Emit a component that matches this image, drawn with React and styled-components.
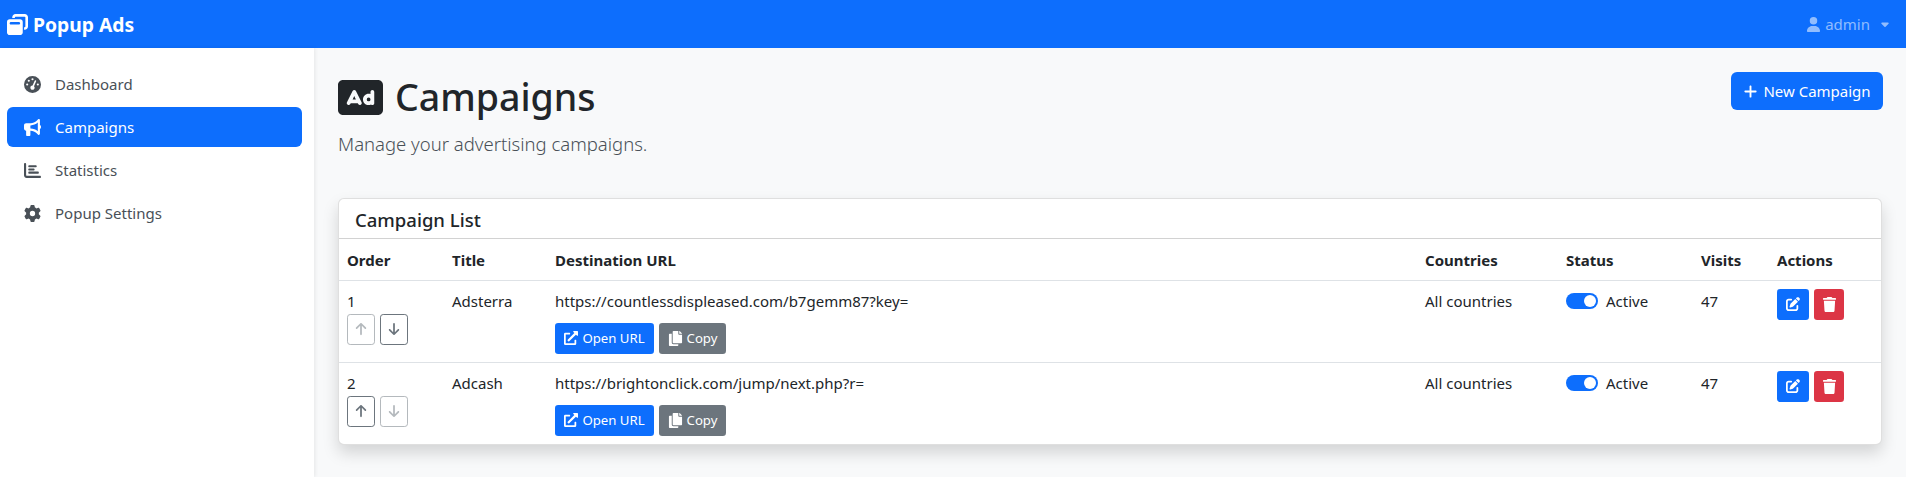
import React from "react";
import styled, { createGlobalStyle } from "styled-components";
import { FaCopy, FaExternalLinkAlt } from "react-icons/fa";
import {
  FaArrowDown,
  FaArrowUp,
  FaBullhorn,
  FaCaretDown,
  FaChartBar,
  FaGaugeHigh,
  FaGear,
  FaPenToSquare,
  FaPlus,
  FaRectangleAd,
  FaTrash,
  FaUser,
  FaWindowRestore,
} from "react-icons/fa6";

const GlobalStyle = createGlobalStyle`
  html, body {
    margin: 0;
    padding: 0;
    height: 100%;
    overflow: hidden;
    background: #f8f9fa;
  }

  body {
    font-family: "Noto Sans", "Open Sans", sans-serif;
    font-size: 15px;
    color: #212529;
  }

  * {
    box-sizing: border-box;
  }
`;

const Page = styled.div`
  display: flex;
  flex-direction: column;
  height: 477px;
`;

const Navbar = styled.header`
  display: flex;
  align-items: center;
  justify-content: space-between;
  flex: 0 0 48px;
  padding: 0 15px 0 7px;
  background: #0d6efd;
`;

const Brand = styled.div`
  display: flex;
  align-items: center;
  gap: 5px;
  color: #fff;
  font-size: 19.3px;
  font-weight: 700;
`;

const UserMenu = styled.div`
  display: flex;
  align-items: center;
  gap: 4px;
  color: rgba(255, 255, 255, 0.55);
  font-size: 15px;
`;

const Caret = styled(FaCaretDown)`
  margin-left: 5px;
`;

const Body = styled.div`
  display: flex;
  flex: 1;
  min-height: 0;
`;

const Sidebar = styled.nav`
  display: flex;
  flex-direction: column;
  gap: 3px;
  flex: 0 0 314px;
  padding: 16px 12px 0 7px;
  background: #fff;
  box-shadow: 1px 0 4px rgba(0, 0, 0, 0.08);
`;

const NavItem = styled.a`
  display: flex;
  align-items: center;
  gap: 14px;
  height: 40px;
  padding: 0 17px;
  border-radius: 6px;
  font-size: 15px;
  color: ${(props) => (props.$active ? "#fff" : "#495057")};
  background: ${(props) => (props.$active ? "#0d6efd" : "transparent")};
`;

const Main = styled.main`
  flex: 1;
  min-width: 0;
  padding: 24px 24px 0;
`;

const PageHeader = styled.div`
  display: flex;
  align-items: flex-start;
  justify-content: space-between;
  height: 126px;
`;

const PageTitle = styled.h1`
  display: flex;
  align-items: center;
  gap: 12px;
  margin: 0 0 8px;
  font-size: 37.5px;
  font-weight: 500;
  line-height: 50px;
`;

const Lead = styled.p`
  margin: 0;
  font-size: 18.5px;
  font-weight: 300;
  line-height: 28px;
  color: #495057;
`;

const Button = styled.button`
  display: inline-flex;
  align-items: center;
  justify-content: center;
  border: 1px solid transparent;
  color: #fff;
  font-family: inherit;
  background: ${(props) => props.$bg || "#0d6efd"};
`;

const NewButton = styled(Button)`
  gap: 5px;
  width: 152px;
  height: 38px;
  margin-right: -1px;
  border-radius: 6px;
  font-size: 15px;
`;

const SmallButton = styled(Button)`
  gap: 4px;
  width: ${(props) => props.$width}px;
  height: 31px;
  padding: 0;
  border-radius: 3.2px;
  font-size: 13.2px;
`;

const Card = styled.section`
  background: #fff;
  border: 1px solid rgba(0, 0, 0, 0.125);
  border-radius: 6px;
  box-shadow: 0 8px 16px rgba(0, 0, 0, 0.15);
`;

const CardHeader = styled.h5`
  display: flex;
  align-items: center;
  height: 40px;
  margin: 0;
  padding: 1px 16px 0;
  font-size: 18.5px;
  font-weight: 500;
  border-bottom: 1px solid rgba(0, 0, 0, 0.175);
`;

const Table = styled.table`
  width: 100%;
  table-layout: fixed;
  border-collapse: collapse;
`;

const Th = styled.th`
  height: 41px;
  padding: 1px 8px 0;
  font-size: 15px;
  font-weight: 700;
  text-align: left;
  border-bottom: 1px solid #dee2e6;
`;

const Td = styled.td`
  height: 82px;
  padding: 8px;
  font-size: 15px;
  line-height: 24px;
  vertical-align: top;
`;

const Row = styled.tr`
  &:not(:last-child) td {
    border-bottom: 1px solid #dee2e6;
  }
`;

const ButtonRow = styled.div`
  display: flex;
  gap: 5px;
  margin-top: ${(props) => props.$top || 0}px;
`;

const OrderButton = styled.button`
  display: flex;
  align-items: center;
  justify-content: center;
  width: 28px;
  height: 31px;
  padding: 0;
  background: transparent;
  border: 1px solid #6c757d;
  border-radius: 3.2px;
  color: #6c757d;
  font-size: 14px;
  opacity: ${(props) => (props.disabled ? 0.5 : 1)};
`;

const StatusCell = styled.div`
  display: flex;
  align-items: center;
  gap: 8px;
  height: 24px;
`;

const Switch = styled.span`
  position: relative;
  width: 32px;
  height: 16px;
  border-radius: 8px;
  background: #0d6efd;

  &::after {
    content: "";
    position: absolute;
    top: 2px;
    right: 2px;
    width: 12px;
    height: 12px;
    border-radius: 50%;
    background: #fff;
  }
`;

const campaigns = [
  { order: 1, title: "Adsterra", url: "https://countlessdispleased.com/b7gemm87?key=", up: false, down: true },
  { order: 2, title: "Adcash", url: "https://brightonclick.com/jump/next.php?r=", up: true, down: false },
];

const navItems = [
  { label: "Dashboard", icon: FaGaugeHigh },
  { label: "Campaigns", icon: FaBullhorn, active: true },
  { label: "Statistics", icon: FaChartBar },
  { label: "Popup Settings", icon: FaGear },
];

export default function App() {
  return (
    <Page>
      <GlobalStyle />
      <Navbar>
        <Brand>
          <FaWindowRestore size={21} />
          Popup Ads
        </Brand>
        <UserMenu>
          <FaUser size={15} />
          admin
          <Caret size={12} />
        </UserMenu>
      </Navbar>
      <Body>
        <Sidebar>
          {navItems.map((item) => (
            <NavItem key={item.label} $active={item.active}>
              <item.icon size={17} />
              {item.label}
            </NavItem>
          ))}
        </Sidebar>
        <Main>
          <PageHeader>
            <div>
              <PageTitle>
                <FaRectangleAd size={45} />
                Campaigns
              </PageTitle>
              <Lead>Manage your advertising campaigns.</Lead>
            </div>
            <NewButton>
              <FaPlus size={15} />
              New Campaign
            </NewButton>
          </PageHeader>
          <Card>
            <CardHeader>Campaign List</CardHeader>
            <Table>
              <colgroup>
                <col width="105" />
                <col width="103" />
                <col width="870" />
                <col width="141" />
                <col width="135" />
                <col width="76" />
                <col width="112" />
              </colgroup>
              <thead>
                <tr>
                  <Th>Order</Th>
                  <Th>Title</Th>
                  <Th>Destination URL</Th>
                  <Th>Countries</Th>
                  <Th>Status</Th>
                  <Th>Visits</Th>
                  <Th>Actions</Th>
                </tr>
              </thead>
              <tbody>
                {campaigns.map((c) => (
                  <Row key={c.order}>
                    <Td>
                      {c.order}
                      <ButtonRow $top={1}>
                        <OrderButton disabled={!c.up}>
                          <FaArrowUp />
                        </OrderButton>
                        <OrderButton disabled={!c.down}>
                          <FaArrowDown />
                        </OrderButton>
                      </ButtonRow>
                    </Td>
                    <Td>{c.title}</Td>
                    <Td>
                      {c.url}
                      <ButtonRow $top={10}>
                        <SmallButton $width={99}>
                          <FaExternalLinkAlt size={14} />
                          Open URL
                        </SmallButton>
                        <SmallButton $width={67} $bg="#6c757d">
                          <FaCopy size={15} />
                          Copy
                        </SmallButton>
                      </ButtonRow>
                    </Td>
                    <Td>All countries</Td>
                    <Td>
                      <StatusCell>
                        <Switch />
                        Active
                      </StatusCell>
                    </Td>
                    <Td>47</Td>
                    <Td>
                      <ButtonRow>
                        <SmallButton $width={32}>
                          <FaPenToSquare size={14} />
                        </SmallButton>
                        <SmallButton $width={30} $bg="#dc3545">
                          <FaTrash size={15} />
                        </SmallButton>
                      </ButtonRow>
                    </Td>
                  </Row>
                ))}
              </tbody>
            </Table>
          </Card>
        </Main>
      </Body>
    </Page>
  );
}
